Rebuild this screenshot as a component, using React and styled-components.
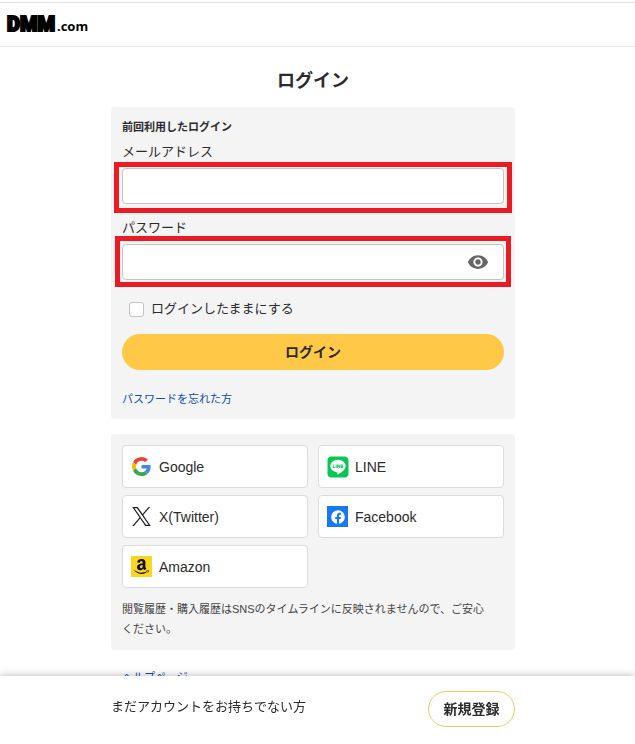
import React, { useState } from "react";
import styled, { createGlobalStyle } from "styled-components";
import { FaAmazon, FaFacebook, FaLine } from "react-icons/fa";
import { MdVisibility, MdVisibilityOff } from "react-icons/md";

const GoogleIcon = () => (
  <svg width="19" height="19" viewBox="0 0 48 48" aria-hidden="true">
    <path
      fill="#EA4335"
      d="M24 9.5c3.54 0 6.71 1.22 9.21 3.6l6.85-6.85C35.9 2.38 30.47 0 24 0 14.62 0 6.51 5.38 2.56 13.22l7.98 6.19C12.43 13.72 17.74 9.5 24 9.5z"
    />
    <path
      fill="#4285F4"
      d="M46.98 24.55c0-1.57-.15-3.09-.38-4.55H24v9.02h12.94c-.58 2.96-2.26 5.48-4.78 7.18l7.73 6c4.51-4.18 7.09-10.36 7.09-17.65z"
    />
    <path
      fill="#FBBC05"
      d="M10.53 28.59c-.48-1.45-.76-2.99-.76-4.59s.27-3.14.76-4.59l-7.98-6.19C.92 16.46 0 20.12 0 24c0 3.88.92 7.54 2.56 10.78l7.97-6.19z"
    />
    <path
      fill="#34A853"
      d="M24 48c6.48 0 11.93-2.13 15.89-5.81l-7.73-6c-2.15 1.45-4.92 2.3-8.16 2.3-6.26 0-11.57-4.22-13.47-9.91l-7.98 6.19C6.51 42.62 14.62 48 24 48z"
    />
  </svg>
);

const XIcon = () => (
  <svg width="19" height="19" viewBox="0 0 24 24" fill="#222" aria-hidden="true">
    <path d="M14.234 10.162 22.977 0h-2.072l-7.591 8.824L7.251 0H.258l9.168 13.343L.258 24H2.33l8.016-9.318L16.749 24h6.993zm-2.837 3.299-.929-1.329L3.076 1.56h3.182l5.965 8.532.929 1.329 7.754 11.09h-3.182z" />
  </svg>
);

const servicios = [
  { nombre: "Google", icon: <GoogleIcon /> },
  { nombre: "LINE", icon: <FaLine size={24} />, bg: "#fff", color: "#06c755" },
  { nombre: "X(Twitter)", icon: <XIcon /> },
  { nombre: "Facebook", icon: <FaFacebook size={14} />, bg: "#1877f2", color: "#fff" },
  { nombre: "Amazon", icon: <FaAmazon size={17} />, bg: "#fbd522", color: "#111" },
];

const App = () => {
  const [email, setEmail] = useState("");
  const [password, setPassword] = useState("");
  const [visible, setVisible] = useState(false);
  const [keep, setKeep] = useState(false);

  return (
    <>
      <GlobalStyle />
      <Header>
        <Logo href="#">
          <LogoMark>DMM</LogoMark>
          <LogoSuffix>.com</LogoSuffix>
        </Logo>
      </Header>
      <Main>
        <Title>ログイン</Title>
        <Card>
          <form onSubmit={(e) => e.preventDefault()}>
            <Subtitle>前回利用したログイン</Subtitle>
            <Field>
              <Label htmlFor="email">メールアドレス</Label>
              <InputBox $frame="-6px -8px -9px">
                <Input
                  id="email"
                  type="email"
                  value={email}
                  onChange={(e) => setEmail(e.target.value)}
                />
              </InputBox>
            </Field>
            <Field>
              <Label htmlFor="password">パスワード</Label>
              <InputBox $frame="-8px -7px -7px">
                <Input
                  id="password"
                  type={visible ? "text" : "password"}
                  value={password}
                  onChange={(e) => setPassword(e.target.value)}
                />
                <EyeButton
                  type="button"
                  aria-label="パスワードを表示"
                  onClick={() => setVisible(!visible)}
                >
                  {visible ? <MdVisibilityOff size={22} /> : <MdVisibility size={22} />}
                </EyeButton>
              </InputBox>
            </Field>
            <KeepLabel>
              <Checkbox
                type="checkbox"
                checked={keep}
                onChange={(e) => setKeep(e.target.checked)}
              />
              ログインしたままにする
            </KeepLabel>
            <LoginButton type="submit">ログイン</LoginButton>
            <TextLink href="#">パスワードを忘れた方</TextLink>
          </form>
        </Card>
        <Card>
          <Grid>
            {servicios.map((s) => (
              <ServiceButton key={s.nombre} type="button">
                <IconBox $bg={s.bg} $color={s.color}>
                  {s.icon}
                </IconBox>
                {s.nombre}
              </ServiceButton>
            ))}
          </Grid>
          <Note>
            閲覧履歴・購入履歴はSNSのタイムラインに反映されませんので、ご安心ください。
          </Note>
        </Card>
        <Help>
          <TextLink href="#">ヘルプページ</TextLink>
        </Help>
      </Main>
      <Footer>
        <FooterInner>
          <FooterText>まだアカウントをお持ちでない方</FooterText>
          <RegisterButton type="button">新規登録</RegisterButton>
        </FooterInner>
      </Footer>
    </>
  );
};

export default App;

const GlobalStyle = createGlobalStyle`
  * {
    box-sizing: border-box;
  }
  body {
    margin: 0;
    background: #fff;
    color: #2b2b2b;
    font-family: "Liberation Sans", "Noto Sans CJK JP", sans-serif;
    font-size: 13px;
  }
  #root {
    padding-top: 2px;
  }
  button,
  input {
    font-family: inherit;
    color: inherit;
  }
`;
const Header = styled.header`
  display: flex;
  align-items: center;
  height: 45px;
  padding: 0 7px;
  border-top: 1px solid #dfe0de;
  border-bottom: 1px solid #e8eaea;
`;
const Logo = styled.a`
  display: flex;
  align-items: baseline;
  gap: 2px;
  color: #000;
  line-height: 20px;
  text-decoration: none;
`;
const LogoMark = styled.span`
  font-family: Roboto, sans-serif;
  font-size: 20px;
  font-weight: 900;
  -webkit-text-stroke: 2px #000;
`;
const LogoSuffix = styled.span`
  font-family: "Noto Sans", sans-serif;
  font-size: 13px;
  font-weight: 700;
`;
const Main = styled.main`
  display: flex;
  flex-direction: column;
  width: 100%;
  max-width: 413px;
  margin: 0 auto;
  padding: 20px 9px 50px 0;
`;
const Title = styled.h1`
  margin: 0 0 12px;
  font-size: 18px;
  line-height: 28px;
  text-align: center;
`;
const Card = styled.section`
  margin-bottom: 15px;
  padding: 11px;
  border-radius: 4px;
  background: #f4f4f4;
`;
const Subtitle = styled.h2`
  margin: 0 0 4px;
  font-size: 11px;
  line-height: 18px;
`;
const Field = styled.div`
  margin-bottom: 12px;
`;
const Label = styled.label`
  display: block;
  margin-bottom: 4px;
  line-height: 24px;
`;
/* red frame drawn over the field */
const InputBox = styled.div`
  position: relative;
  &::after {
    content: "";
    position: absolute;
    inset: ${(p) => p.$frame};
    border: 5px solid #e91c24;
    pointer-events: none;
  }
`;
const Input = styled.input`
  display: block;
  width: 100%;
  height: 36px;
  padding: 0 48px 0 10px;
  border: 1px solid #c4c4c4;
  border-radius: 4px;
  background: #fff;
  font-size: 14px;
  outline: none;
`;
const EyeButton = styled.button`
  position: absolute;
  top: 0;
  right: 8px;
  display: flex;
  align-items: center;
  justify-content: center;
  width: 36px;
  height: 36px;
  padding: 0;
  border: none;
  background: none;
  color: #666;
  cursor: pointer;
`;
const KeepLabel = styled.label`
  display: flex;
  align-items: center;
  gap: 7px;
  margin: 19px 0 15px;
  padding-left: 7px;
  line-height: 20px;
`;
const Checkbox = styled.input`
  appearance: none;
  width: 15px;
  height: 15px;
  margin: 0;
  border: 1px solid #c4c4c4;
  border-radius: 3px;
  background: #fff;
  &:checked {
    background: #ffc847;
  }
`;
const LoginButton = styled.button`
  display: block;
  width: 100%;
  height: 36px;
  margin-bottom: 20px;
  padding: 0 0 3px;
  border: none;
  border-radius: 18px;
  background: #ffc847;
  font-size: 14px;
  font-weight: 700;
  cursor: pointer;
`;
const TextLink = styled.a`
  display: block;
  color: #0b4fa8;
  font-size: 11px;
  line-height: 18px;
  text-decoration: none;
`;
const Grid = styled.div`
  display: grid;
  grid-template-columns: 1fr 1fr;
  gap: 7px 10px;
`;
const ServiceButton = styled.button`
  display: flex;
  align-items: center;
  gap: 7px;
  height: 43px;
  padding: 0 8px;
  border: 1px solid #dcdcdc;
  border-radius: 4px;
  background: #fff;
  font-size: 14px;
  cursor: pointer;
`;
const IconBox = styled.span`
  display: flex;
  align-items: center;
  justify-content: center;
  width: 21px;
  height: 21px;
  background: ${(p) => p.$bg || "transparent"};
  color: ${(p) => p.$color || "inherit"};
  svg {
    flex: none;
  }
`;
const Note = styled.p`
  margin: 11px 0 0;
  padding-right: 11px;
  color: #444;
  font-size: 11px;
  line-height: 20px;
`;
const Help = styled.div`
  padding: 3px 11px 0;
`;
const Footer = styled.footer`
  position: fixed;
  right: 0;
  bottom: 0;
  left: 0;
  padding: 15px 0 17px;
  background: #fff;
  box-shadow: 0 0 8px rgba(0, 0, 0, 0.3);
`;
const FooterInner = styled.div`
  display: flex;
  align-items: flex-start;
  justify-content: space-between;
  max-width: 413px;
  margin: 0 auto;
  padding-right: 9px;
`;
const FooterText = styled.span`
  line-height: 32px;
`;
const RegisterButton = styled.button`
  width: 87px;
  height: 36px;
  padding: 0 0 3px;
  border: 1px solid #eec95c;
  border-radius: 18px;
  background: #fff;
  font-size: 14px;
  font-weight: 700;
  cursor: pointer;
`;
